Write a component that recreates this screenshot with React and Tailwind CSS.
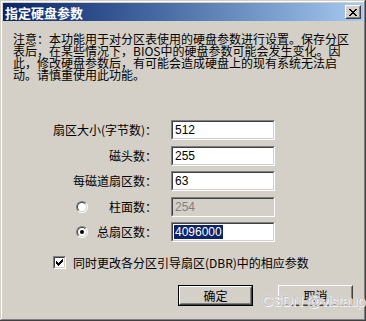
import React from 'react';

const cjk = { fontFamily: '"Noto Sans CJK SC", "Liberation Sans", sans-serif' };
const latin = { fontFamily: '"Liberation Sans", "Noto Sans CJK SC", sans-serif' };

const Field = ({ value, disabled, selected }) => (
  <div className="w-[104px] h-[20px] border border-[#808080] border-r-white border-b-white">
    <div
      className={`h-full border border-[#404040] border-r-[#D4D0C8] border-b-[#D4D0C8] flex items-center pl-[1px] text-[12px] ${
        disabled ? 'bg-[#D4D0C8] text-[#808080]' : 'bg-white text-black'
      }`}
      style={latin}
    >
      {selected ? (
        <span className="bg-[#0A246A] text-white leading-[14px] px-[1px]">{value}</span>
      ) : (
        <span className="px-[1px]">{value}</span>
      )}
    </div>
  </div>
);

const Radio = ({ checked }) => (
  <div className="w-[12px] h-[12px] rounded-full border border-[#808080] border-r-white border-b-white">
    <div className="w-full h-full rounded-full border border-[#404040] border-r-[#D4D0C8] border-b-[#D4D0C8] bg-white flex items-center justify-center">
      {checked && <div className="w-[4px] h-[4px] rounded-full bg-black" />}
    </div>
  </div>
);

const Row = ({ label, radio, ...field }) => (
  <div className="flex items-center h-[20px]">
    <div className="w-[144px] flex items-center">
      {radio !== undefined && (
        <div className="ml-[63px]">
          <Radio checked={radio} />
        </div>
      )}
      <span className="ml-auto whitespace-nowrap text-[12px] leading-[12px] text-black" style={cjk}>
        {label}
      </span>
    </div>
    <div className="ml-[14px]">
      <Field {...field} />
    </div>
  </div>
);

const Button = ({ children, primary }) => (
  <div className={`w-[75px] h-[21px] ${primary ? 'border border-black' : ''}`}>
    <div className="h-full border border-white border-r-[#404040] border-b-[#404040]">
      <div
        className="h-full border border-transparent border-r-[#808080] border-b-[#808080] flex items-center justify-center text-[12px] text-black"
        style={cjk}
      >
        {children}
      </div>
    </div>
  </div>
);

export default function App() {
  return (
    <div className="relative w-[366px] h-[321px] bg-[#D4D0C8] p-[3px] shadow-[inset_-1px_-1px_#404040,inset_1px_1px_#D4D0C8,inset_-2px_-2px_#808080,inset_2px_2px_#ffffff] overflow-hidden">
      {/* title bar */}
      <div className="h-[18px] bg-linear-to-r from-[#0A246A] to-[#A6CAF0] flex items-center justify-between pl-[2px] pr-[2px]">
        <span className="text-white font-bold text-[13px] leading-[13px]" style={cjk}>
          指定硬盘参数
        </span>
        <div className="w-[16px] h-[14px] bg-[#D4D0C8] border border-white border-r-[#404040] border-b-[#404040]">
          <div className="h-full border border-transparent border-r-[#808080] border-b-[#808080] flex items-center justify-center">
            <svg width="8" height="7" viewBox="0 0 8 7" shapeRendering="crispEdges">
              <path d="M0 0h2v1H0zM1 1h2v1H1zM2 2h1v1H2zM3 3h2v1H3zM2 4h1v1H2zM1 5h2v1H1zM0 6h2v1H0zM6 0h2v1H6zM5 1h2v1H5zM5 2h1v1H5zM5 4h1v1H5zM5 5h2v1H5zM6 6h2v1H6zM3 2h2v1H3zM3 4h2v1H3z" fill="#000" />
            </svg>
          </div>
        </div>
      </div>

      {/* note */}
      <div className="mt-[12px] ml-[10px] text-[12px] leading-[12px] text-black whitespace-nowrap" style={cjk}>
        注意：本功能用于对分区表使用的硬盘参数进行设置。保存分区
        <br />
        表后，在某些情况下，BIOS中的硬盘参数可能会发生变化。因
        <br />
        此，修改硬盘参数后，有可能会造成硬盘上的现有系统无法启
        <br />
        动。请慎重使用此功能。
      </div>

      {/* fields */}
      <div className="mt-[39px] ml-[10px] flex flex-col gap-[5.5px]">
        <Row label="扇区大小(字节数)：" value="512" />
        <Row label="磁头数：" value="255" />
        <Row label="每磁道扇区数：" value="63" />
        <Row label="柱面数：" value="254" radio={false} disabled />
        <Row label="总扇区数：" value="4096000" radio={true} selected />
      </div>

      {/* checkbox */}
      <div className="mt-[14px] ml-[50px] flex items-center gap-[7px]">
        <div className="w-[13px] h-[13px] border border-[#808080] border-r-white border-b-white">
          <div className="h-full border border-[#404040] border-r-[#D4D0C8] border-b-[#D4D0C8] bg-white flex items-center justify-center">
            <svg width="7" height="7" viewBox="0 0 7 7" shapeRendering="crispEdges">
              <path d="M0 2h1v3H0zM1 3h1v3H1zM2 4h1v3H2zM3 3h1v3H3zM4 2h1v3H4zM5 1h1v3H5zM6 0h1v3H6z" fill="#000" />
            </svg>
          </div>
        </div>
        <span className="text-[12px] leading-[12px] text-black whitespace-nowrap" style={cjk}>
          同时更改各分区引导扇区(DBR)中的相应参数
        </span>
      </div>

      {/* buttons */}
      <div className="mt-[16px] ml-[175px] flex gap-[25px]">
        <Button primary>确定</Button>
        <Button>取消</Button>
      </div>

      <span
        className="absolute left-[262px] top-[290px] text-[15px] text-[#c4c4c4] tracking-[-0.5px] [text-shadow:0_0_1px_#ffffff,1px_1px_0_#f4f4f4]"
        style={latin}
      >
        CSDN @vistaup
      </span>
    </div>
  );
}
